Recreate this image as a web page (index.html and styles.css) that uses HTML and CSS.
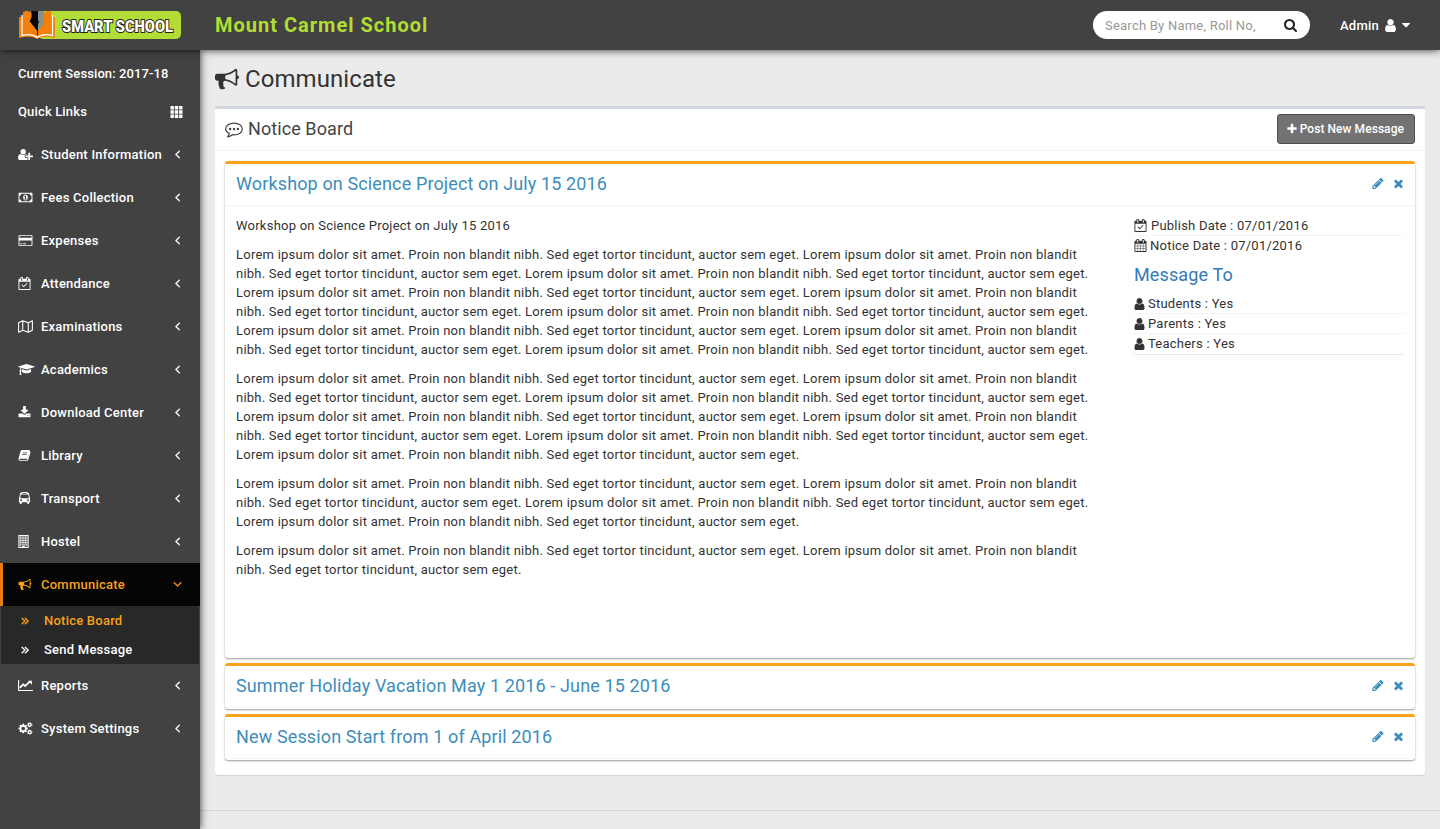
FILE: index.html
```html
<!DOCTYPE html>
<html lang="en">
<head>
<meta charset="utf-8">
<title>Mount Carmel School</title>
<link rel="stylesheet" href="styles.css">
</head>
<body>
<svg class="sprite" xmlns="http://www.w3.org/2000/svg">
  <symbol id="user" viewBox="256 0 1280 1792"><path d="M1536 1399q0 109-62.5 187t-150.5 78h-854q-88 0-150.5-78t-62.5-187q0-85 8.5-160.5t31.5-152 58.5-131 94-89 134.5-34.5q131 128 313 128t313-128q76 0 134.5 34.5t94 89 58.5 131 31.5 152 8.5 160.5zm-256-887q0 159-112.5 271.5t-271.5 112.5-271.5-112.5-112.5-271.5 112.5-271.5 271.5-112.5 271.5 112.5 112.5 271.5z"/></symbol>
  <symbol id="user-plus" viewBox="0 0 2048 1792"><path d="M704 896q-159 0-271.500-112.500t-112.500-271.500 112.500-271.500 271.500-112.500 271.500 112.500 112.500 271.500-112.500 271.500-271.500 112.500zM1664 1024h352q13 0 22.500 9.500t9.500 22.500v192q0 13-9.500 22.500t-22.500 9.500h-352v352q0 13-9.500 22.500t-22.500 9.500h-192q-13 0-22.500-9.500t-9.500-22.500v-352h-352q-13 0-22.500-9.500t-9.500-22.500v-192q0-13 9.500-22.500t22.500-9.500h352v-352q0-13 9.500-22.500t22.500-9.500h192q13 0 22.500 9.500t9.500 22.500v352zM928 1248q0 52 38 90t90 38h256v238q-68 50-171 50h-874q-121 0-194-69t-73-190q0-53 3.500-103.500t14-109 26.500-108.500 43-97.500 62-81 85.500-53.500 111.500-20q19 0 39 17 79 61 154.500 91.500t164.500 30.500 164.500-30.500 154.500-91.500q20-17 39-17 132 0 217 96h-223q-52 0-90 38t-38 90v192z"/></symbol>
  <symbol id="bullhorn" viewBox="0 0 1792 1792"><path d="M1664 640q53 0 90.500 37.500t37.500 90.500-37.500 90.500-90.500 37.500v384q0 52-38 90t-90 38q-417-347-812-380-58 19-91 66t-31 100.500 40 92.500q-20 33-23 65.500t6 58 33.500 55 48 50 61.500 50.500q-29 58-111.500 83t-168.500 11.500-132-55.500q-7-23-29.500-87.500t-32-94.500-23-89-15-101 3.500-98 22-110.500h-122q-66 0-113-47t-47-113v-192q0-66 47-113t113-47h480q435 0 896-384 52 0 90 38t38 90v384zm-128 604v-954q-394 302-768 343v270q377 42 768 341z"/></symbol>
  <symbol id="search" viewBox="64 0 1664 1792"><path d="M1216 832q0-185-131.500-316.500t-316.500-131.500-316.500 131.500-131.500 316.500 131.500 316.500 316.500 131.500 316.500-131.500 131.500-316.500zm512 832q0 52-38 90t-90 38q-54 0-90-38l-343-342q-179 124-399 124-143 0-273.500-55.500t-225-150-150-225-55.500-273.500 55.500-273.500 150-225 225-150 273.500-55.500 273.500 55.500 225 150 150 225 55.500 273.500q0 220-124 399l343 343q37 37 37 90z"/></symbol>
  <symbol id="plus" viewBox="192 0 1408 1792"><path d="M1600 736v192q0 40-28 68t-68 28h-416v416q0 40-28 68t-68 28h-192q-40 0-68-28t-28-68v-416h-416q-40 0-68-28t-28-68v-192q0-40 28-68t68-28h416v-416q0-40 28-68t68-28h192q40 0 68 28t28 68v416h416q40 0 68 28t28 68z"/></symbol>
  <symbol id="times" viewBox="192 0 1408 1792"><path d="M1490 1322q0 40-28 68l-136 136q-28 28-68 28t-68-28l-294-294-294 294q-28 28-68 28t-68-28l-136-136q-28-28-28-68t28-68l294-294-294-294q-28-28-28-68t28-68l136-136q28-28 68-28t68 28l294 294 294-294q28-28 68-28t68 28l136 136q28 28 28 68t-28 68l-294 294 294 294q28 28 28 68z"/></symbol>
  <symbol id="pencil" viewBox="128 0 1536 1792"><path d="M491 1536l91-91-235-235-91 91v107h128v128h107zm523-928q0-22-22-22-10 0-17 7l-542 542q-7 7-7 17 0 22 22 22 10 0 17-7l542-542q7-7 7-17zm-54-192l416 416-832 832h-416v-416zm683 96q0 53-37 90l-166 166-416-416 166-165q36-38 90-38 53 0 91 38l235 234q37 39 37 91z"/></symbol>
  <symbol id="angle-left" viewBox="576 0 640 1792"><path stroke="currentColor" stroke-width="60" d="M1203 544q0 13-10 23l-393 393 393 393q10 10 10 23t-10 23l-50 50q-10 10-23 10t-23-10l-466-466q-10-10-10-23t10-23l466-466q10-10 23-10t23 10l50 50q10 10 10 23z"/></symbol>
  <symbol id="angle-down" viewBox="320 0 1152 1792"><path stroke="currentColor" stroke-width="50" d="M1395 736q0 13-10 23l-466 466q-10 10-23 10t-23-10l-466-466q-10-10-10-23t10-23l50-50q10-10 23-10t23 10l393 393 393-393q10-10 23-10t23 10l50 50q10 10 10 23z"/></symbol>
  <symbol id="double-right" viewBox="0 0 1024 1792"><path fill="none" stroke="currentColor" stroke-width="175" d="M85 500l410 410-410 410M500 500l410 410-410 410"/></symbol>
  <symbol id="caret" viewBox="384 0 1024 1792"><path d="M1408 704q0 26-19 45l-448 448q-19 19-45 19t-45-19l-448-448q-19-19-19-45t19-45 45-19h896q26 0 45 19t19 45z"/></symbol>
  <symbol id="th" viewBox="0 0 12 12"><path d="M0 0h3.400v3.400H0zM4.300 0h3.400v3.400H4.300zM8.600 0H12v3.400H8.600zM0 4.300h3.400v3.400H0zM4.300 4.300h3.400v3.400H4.300zM8.600 4.300H12v3.400H8.600zM0 8.600h3.400V12H0zM4.300 8.600h3.400V12H4.300zM8.600 8.600H12V12H8.600z"/></symbol>
  <symbol id="money" viewBox="0 0 1920 1792"><path fill-rule="evenodd" d="M64 256h1792q64 0 64 64v1152q0 64-64 64H64q-64 0-64-64V320q0-64 64-64zM384 384q0 106-75 181t-181 75v512q106 0 181 75t75 181h1152q0-106 75-181t181-75V640q-106 0-181-75t-75-181zM960 480c190 0 320 180 320 416s-130 416-320 416-320-180-320-416 130-416 320-416zM890 620l-130 120 70 80 60-50v290H780v110h360v-110h-110V620z"/></symbol>
  <symbol id="card" viewBox="0 0 1920 1792"><path fill-rule="evenodd" d="M160 128h1600q160 0 160 160v1216q0 160-160 160H160q-160 0-160-160V288q0-160 160-160zM160 256q-32 0-32 32v224h1664V288q0-32-32-32zM128 896v608q0 32 32 32h1600q32 0 32-32V896zM256 1280h256v128H256zM640 1280h384v128H640z"/></symbol>
  <symbol id="cal-check" viewBox="0 0 1664 1792"><path fill-rule="evenodd" d="M128 256h128v-96q0-160 160-160h64q160 0 160 160v96h384v-96q0-160 160-160h64q160 0 160 160v96h128q128 0 128 128v1280q0 128-128 128H128Q0 1792 0 1664V384q0-128 128-128zM128 640v1024h1408V640zM384 128v384h128V128zM1152 128v384h128V128z"/><path d="M420 1120l90-90 220 220 440-440 90 90-530 530z"/></symbol>
  <symbol id="calendar" viewBox="0 0 1664 1792"><path fill-rule="evenodd" d="M128 256h128v-96q0-160 160-160h64q160 0 160 160v96h384v-96q0-160 160-160h64q160 0 160 160v96h128q128 0 128 128v1280q0 128-128 128H128Q0 1792 0 1664V384q0-128 128-128zM128 640v1024h1408V640zM384 128v384h128V128zM1152 128v384h128V128z"/><path fill="none" stroke="currentColor" stroke-width="64" d="M448 640v1024M832 640v1024M1216 640v1024M128 960h1408M128 1312h1408"/></symbol>
  <symbol id="map" viewBox="0 0 2048 1792"><path fill="none" stroke="currentColor" stroke-width="150" stroke-linejoin="round" d="M75 384L640 96l768 288 565-288v1312l-565 288-768-288-565 288zM640 96v1312M1408 384v1312"/></symbol>
  <symbol id="cap" viewBox="0 0 2304 1792"><path d="M1774 836l18 316q4 69-82 128t-235 93.500-323 34.500-323-34.500-235-93.500-82-128l18-316 574 181q22 7 48 7t48-7zm530-324q0 23-22 31l-1120 352q-4 1-10 1t-10-1l-652-206q-43 34-71 111.500t-34 178.500q63 36 63 109 0 69-58 107l58 433q2 14-8 25-9 11-24 11h-192q-15 0-24-11-10-11-8-25l58-433q-58-38-58-107 0-73 65-111 11-207 98-330l-333-104q-22-8-22-31t22-31l1120-352q4-1 10-1t10 1l1120 352q22 8 22 31z"/></symbol>
  <symbol id="download" viewBox="64 0 1664 1792"><path d="M1344 1344q0-26-19-45t-45-19-45 19-19 45 19 45 45 19 45-19 19-45zm256 0q0-26-19-45t-45-19-45 19-19 45 19 45 45 19 45-19 19-45zm128-224v320q0 40-28 68t-68 28h-1472q-40 0-68-28t-28-68v-320q0-40 28-68t68-28h465l135 136q58 56 136 56t136-56l136-136h464q40 0 68 28t28 68zm-325-569q17 41-14 70l-448 448q-18 19-45 19t-45-19l-448-448q-31-29-14-70 17-39 59-39h256v-448q0-26 19-45t45-19h256q26 0 45 19t19 45v448h256q42 0 59 39z"/></symbol>
  <symbol id="book" viewBox="0 0 1664 1792"><path fill-rule="evenodd" d="M520 128h930q130 0 90 150l60 60q80 50 50 160l-290 960q-50 170-200 170H250Q60 1628 10 1460q-30-80 10-170L300 280q50-152 220-152zM600 480l-28 96h620l28-96zM520 740l-28 96h620l28-96zM170 1330q-50 170 100 170h830q90 0 120-80l270-900-10 0-230 740q-30 70-110 70z"/></symbol>
  <symbol id="bus" viewBox="0 0 1536 1792"><path fill-rule="evenodd" d="M768 0c380 0 620 90 640 260l60 440q68 20 68 120v580h-128v180q0 84-128 84t-128-84v-180H384v180q0 84-128 84t-128-84v-180H0V820Q0 720 68 700l60-440C148 90 388 0 768 0zM480 130v100h576V130zM300 340q-50 0-60 50l-60 400q-8 60 50 60h1076q58 0 50-60l-60-400q-10-50-60-50zM290 1010a120 120 0 1 0 1 0zM1246 1010a120 120 0 1 0 1 0z"/></symbol>
  <symbol id="building" viewBox="0 0 1408 1792"><path fill-rule="evenodd" d="M0 0h1408v1792H0zM150 128v1536h362v-220h384v220h362V128z"/><path fill="none" stroke="currentColor" stroke-width="165" stroke-dasharray="170 50" d="M220 300h990M220 540h990M220 780h990M220 1020h990M220 1260h990M240 1480h200M1000 1480h200"/></symbol>
  <symbol id="chart" viewBox="0 0 2048 1792"><path d="M0 128h150v1388h1898v150H0z"/><path fill="none" stroke="currentColor" stroke-width="230" d="M230 1220l490-490 256 256 660-660"/><path d="M1390 256h480q50 0 50 50v480l-530-530z"/></symbol>
  <symbol id="cogs" viewBox="0 0 1920 1792"><path d="M896 896q0-106-75-181t-181-75-181 75-75 181 75 181 181 75 181-75 75-181zm384-91v185q0 10-7 19.500t-16 10.500l-155 24q-11 35-32 76 34 48 90 115 7 11 7 20 0 12-7 19-23 30-82.500 89.500t-78.500 59.500q-11 0-21-7l-115-90q-37 19-77 31-11 108-23 155-7 24-30 24h-186q-11 0-20-7.500t-10-17.500l-23-153q-34-10-75-31l-118 89q-7 7-20 7-11 0-21-8-144-133-144-160 0-9 7-19 10-14 41-53t47-61q-23-44-35-82l-152-24q-10-1-17-9.500t-7-19.500v-185q0-10 7-19.500t16-10.500l155-24q11-35 32-76-34-48-90-115-7-11-7-20 0-12 7-20 22-30 82-89t79-59q11 0 21 7l115 90q34-18 77-32 11-108 23-154 7-24 30-24h186q11 0 20 7.500t10 17.500l23 153q34 10 75 31l118-89q8-7 20-7 11 0 21 8 144 133 144 160 0 8-7 19-12 16-42 54t-45 60q23 48 34 82l152 23q10 2 17 10.500t7 19.500z"/><g fill="none" stroke="currentColor"><circle cx="1536" cy="384" r="205" stroke-width="180"/><circle cx="1536" cy="384" r="320" stroke-width="90" stroke-dasharray="168 168"/><circle cx="1536" cy="1408" r="205" stroke-width="180"/><circle cx="1536" cy="1408" r="320" stroke-width="90" stroke-dasharray="168 168"/></g></symbol>
  <symbol id="comment" viewBox="0 0 1792 1792"><path fill="none" stroke="currentColor" stroke-width="120" stroke-linejoin="round" d="M896 216c460 0 832 250 832 580s-372 576-832 576q-80 0-160-10-210 180-480 210 130-120 170-330C200 1130 64 970 64 796c0-330 372-580 832-580z"/><circle cx="512" cy="796" r="120"/><circle cx="896" cy="796" r="120"/><circle cx="1280" cy="796" r="120"/></symbol>
</svg>

<header class="topbar">
  <svg class="logo" width="164" height="30" viewBox="0 0 164 30">
    <rect x="20" y="1" width="143" height="28" rx="5" fill="#b2dd36"/>
    <path d="M1 7H37V28Q25 25 19 29Q13 25 1 28z" fill="#f57f0b"/>
    <path d="M4 5V25.500Q14 23 19 27.500Q25 23 34.500 25.500V5" fill="none" stroke="#fff" stroke-width="1.300"/>
    <path d="M12 1H26V22H12z" fill="#85938f"/>
    <path d="M13 1H20V22L11 11Q15 7 13 1z" fill="#050505"/>
    <path d="M5 2Q9 0 12.500 2.500Q14.500 8 11.500 11L19 21V26Q14 21 5 24z" fill="#f57f0b"/>
    <path d="M33.500 2Q30 0 26.500 2.500Q24.500 8 27.500 11L20 21V26Q25 21 33.500 24z" fill="#f57f0b"/>
    <path d="M19.500 12V25" stroke="#050505" stroke-width=".8"/>
    <circle cx="19.500" cy="12" r="1.600" fill="#050505"/>
    <text class="logo-text" x="44" y="22" textLength="111" lengthAdjust="spacingAndGlyphs">SMART SCHOOL</text>
  </svg>
  <div class="school">Mount Carmel School</div>
  <div class="search"><span>Search By Name, Roll No,</span><svg class="i-search"><use href="#search"/></svg></div>
  <div class="admin">Admin <svg class="i-user"><use href="#user"/></svg><svg class="i-caret"><use href="#caret"/></svg></div>
</header>

<div class="shell">
  <aside class="sidebar">
    <div class="session">Current Session: 2017-18</div>
    <div class="quick"><span>Quick Links</span><svg class="i-th"><use href="#th"/></svg></div>
    <nav>
      <a class="item"><svg class="mi w2048"><use href="#user-plus"/></svg><span>Student Information</span><svg class="arrow"><use href="#angle-left"/></svg></a>
      <a class="item"><svg class="mi w1920"><use href="#money"/></svg><span>Fees Collection</span><svg class="arrow"><use href="#angle-left"/></svg></a>
      <a class="item"><svg class="mi w1920"><use href="#card"/></svg><span>Expenses</span><svg class="arrow"><use href="#angle-left"/></svg></a>
      <a class="item"><svg class="mi w1664"><use href="#cal-check"/></svg><span>Attendance</span><svg class="arrow"><use href="#angle-left"/></svg></a>
      <a class="item"><svg class="mi w2048"><use href="#map"/></svg><span>Examinations</span><svg class="arrow"><use href="#angle-left"/></svg></a>
      <a class="item"><svg class="mi w2304"><use href="#cap"/></svg><span>Academics</span><svg class="arrow"><use href="#angle-left"/></svg></a>
      <a class="item"><svg class="mi w1664"><use href="#download"/></svg><span>Download Center</span><svg class="arrow"><use href="#angle-left"/></svg></a>
      <a class="item"><svg class="mi w1664"><use href="#book"/></svg><span>Library</span><svg class="arrow"><use href="#angle-left"/></svg></a>
      <a class="item"><svg class="mi w1664"><use href="#bus"/></svg><span>Transport</span><svg class="arrow"><use href="#angle-left"/></svg></a>
      <a class="item"><svg class="mi w1408"><use href="#building"/></svg><span>Hostel</span><svg class="arrow"><use href="#angle-left"/></svg></a>
      <a class="item active"><svg class="mi w1792"><use href="#bullhorn"/></svg><span>Communicate</span><svg class="arrow down"><use href="#angle-down"/></svg></a>
      <div class="submenu">
        <a class="sub current"><svg class="i-dbl"><use href="#double-right"/></svg><span>Notice Board</span></a>
        <a class="sub"><svg class="i-dbl"><use href="#double-right"/></svg><span>Send Message</span></a>
      </div>
      <a class="item"><svg class="mi w2048"><use href="#chart"/></svg><span>Reports</span><svg class="arrow"><use href="#angle-left"/></svg></a>
      <a class="item"><svg class="mi w1920"><use href="#cogs"/></svg><span>System Settings</span><svg class="arrow"><use href="#angle-left"/></svg></a>
    </nav>
  </aside>

  <div class="content">
    <h1><svg class="i-h1"><use href="#bullhorn"/></svg><span>Communicate</span></h1>
    <section class="box">
      <div class="box-head">
        <h2><svg class="i-h2"><use href="#comment"/></svg><span>Notice Board</span></h2>
        <button class="post"><svg class="i-plus"><use href="#plus"/></svg><span>Post New Message</span></button>
      </div>
      <div class="notices">
        <article class="notice open">
          <div class="notice-head"><h3>Workshop on Science Project on July 15 2016</h3><svg class="i-pencil"><use href="#pencil"/></svg><svg class="i-times"><use href="#times"/></svg></div>
          <div class="notice-body">
            <div class="message">
              <p>Workshop on Science Project on July 15 2016</p>
              <p>Lorem ipsum dolor sit amet. Proin non blandit nibh. Sed eget tortor tincidunt, auctor sem eget. Lorem ipsum dolor sit amet. Proin non blandit nibh. Sed eget tortor tincidunt, auctor sem eget. Lorem ipsum dolor sit amet. Proin non blandit nibh. Sed eget tortor tincidunt, auctor sem eget. Lorem ipsum dolor sit amet. Proin non blandit nibh. Sed eget tortor tincidunt, auctor sem eget. Lorem ipsum dolor sit amet. Proin non blandit nibh. Sed eget tortor tincidunt, auctor sem eget. Lorem ipsum dolor sit amet. Proin non blandit nibh. Sed eget tortor tincidunt, auctor sem eget. Lorem ipsum dolor sit amet. Proin non blandit nibh. Sed eget tortor tincidunt, auctor sem eget. Lorem ipsum dolor sit amet. Proin non blandit nibh. Sed eget tortor tincidunt, auctor sem eget. Lorem ipsum dolor sit amet. Proin non blandit nibh. Sed eget tortor tincidunt, auctor sem eget.</p>
              <p>Lorem ipsum dolor sit amet. Proin non blandit nibh. Sed eget tortor tincidunt, auctor sem eget. Lorem ipsum dolor sit amet. Proin non blandit nibh. Sed eget tortor tincidunt, auctor sem eget. Lorem ipsum dolor sit amet. Proin non blandit nibh. Sed eget tortor tincidunt, auctor sem eget. Lorem ipsum dolor sit amet. Proin non blandit nibh. Sed eget tortor tincidunt, auctor sem eget. Lorem ipsum dolor sit amet. Proin non blandit nibh. Sed eget tortor tincidunt, auctor sem eget. Lorem ipsum dolor sit amet. Proin non blandit nibh. Sed eget tortor tincidunt, auctor sem eget. Lorem ipsum dolor sit amet. Proin non blandit nibh. Sed eget tortor tincidunt, auctor sem eget.</p>
              <p>Lorem ipsum dolor sit amet. Proin non blandit nibh. Sed eget tortor tincidunt, auctor sem eget. Lorem ipsum dolor sit amet. Proin non blandit nibh. Sed eget tortor tincidunt, auctor sem eget. Lorem ipsum dolor sit amet. Proin non blandit nibh. Sed eget tortor tincidunt, auctor sem eget. Lorem ipsum dolor sit amet. Proin non blandit nibh. Sed eget tortor tincidunt, auctor sem eget.</p>
              <p>Lorem ipsum dolor sit amet. Proin non blandit nibh. Sed eget tortor tincidunt, auctor sem eget. Lorem ipsum dolor sit amet. Proin non blandit nibh. Sed eget tortor tincidunt, auctor sem eget.</p>
            </div>
            <div class="details">
              <div class="row"><svg class="i-cal pub"><use href="#cal-check"/></svg>Publish Date : 07/01/2016</div>
              <div class="row plain"><svg class="i-cal"><use href="#calendar"/></svg>Notice Date : 07/01/2016</div>
              <h4>Message To</h4>
              <div class="row"><svg class="i-person"><use href="#user"/></svg>Students : Yes</div>
              <div class="row"><svg class="i-person"><use href="#user"/></svg>Parents : Yes</div>
              <div class="row plain"><svg class="i-person"><use href="#user"/></svg>Teachers : Yes</div>
            </div>
          </div>
        </article>
        <article class="notice">
          <div class="notice-head"><h3>Summer Holiday Vacation May 1 2016 - June 15 2016</h3><svg class="i-pencil"><use href="#pencil"/></svg><svg class="i-times"><use href="#times"/></svg></div>
        </article>
        <article class="notice">
          <div class="notice-head"><h3>New Session Start from 1 of April 2016</h3><svg class="i-pencil"><use href="#pencil"/></svg><svg class="i-times"><use href="#times"/></svg></div>
        </article>
      </div>
    </section>
    <footer class="footer"></footer>
  </div>
</div>
</body>
</html>
```
FILE: styles.css
```css
* { box-sizing: border-box; }
body { margin: 0; height: 829px; overflow: hidden; background: #ebebeb; font: 400 13px/19px Roboto, sans-serif; color: #333; letter-spacing: .235px; }
h1, h2, h3, h4, p { margin: 0; }
svg { display: block; flex: none; fill: currentColor; }
.sprite { position: absolute; width: 0; height: 0; }

.topbar { position: relative; z-index: 3; display: flex; align-items: center; height: 50px; padding: 0 30px 0 18px; background: #424242; color: #fff; box-shadow: 0 0 8px rgba(0,0,0,.8); }
.logo { overflow: visible; }
.logo-text { font: 900 17px Roboto, sans-serif; letter-spacing: 0; fill: #fff; stroke: #222; stroke-width: 2px; paint-order: stroke; }
.school { margin-left: 33px; font-size: 20px; line-height: 50px; font-weight: 700; letter-spacing: 1px; color: #b0de33; }
.search { display: flex; align-items: center; justify-content: space-between; width: 217px; height: 28px; margin-left: auto; padding: 0 13px 0 12px; border-radius: 14px; background: #fff; color: #999; letter-spacing: .23px; }
.i-search { width: 13px; height: 14px; color: #222; }
.admin { display: flex; align-items: center; margin-left: 30px; font-weight: 500; }
.i-user { width: 11px; height: 15px; margin-left: 6px; }
.i-caret { width: 8px; height: 14px; margin-left: 6px; }

.shell { display: flex; height: 779px; }
.sidebar { position: relative; z-index: 2; width: 200px; flex: none; padding-top: 14px; background: #424242; color: #fff; font-weight: 500; box-shadow: 0 0 8px rgba(0,0,0,.8); }
.session { padding-left: 18px; letter-spacing: .1px; }
.quick { display: flex; justify-content: space-between; align-items: center; margin: 19px 17px 12px 18px; letter-spacing: .15px; }
.i-th { width: 13px; height: 12px; }
.item { display: flex; align-items: center; height: 43px; padding: 0 19px 0 18px; }
.item span { flex: 1; white-space: nowrap; }
.mi { height: 13px; }
.w2304 { width: 17px; margin-right: 6px; }
.w2048 { width: 15px; margin-right: 8px; }
.w1920 { width: 15px; margin-right: 8px; }
.w1792 { width: 14px; margin-right: 9px; }
.w1664 { width: 13px; margin-right: 10px; }
.w1408 { width: 11px; margin-right: 12px; }
.arrow { width: 5px; height: 14px; margin: 0 1px 1px 0; }
.arrow.down { width: 9px; margin: 0 -1px 1px 0; }
.item.active { padding-left: 15px; border-left: 3px solid #e87c0e; background: #050505; color: #f9a11b; }
.submenu { margin: 0 1px; background: #282828; }
.sub { display: flex; align-items: center; height: 29px; padding-left: 20px; }
.sub span { margin-left: 15px; }
.i-dbl { width: 8px; height: 14px; }
.current { color: #f9a11b; }

.content { flex: 1; display: flex; flex-direction: column; }
h1 { display: flex; align-items: center; gap: 6px; height: 56px; padding: 2px 0 0 15px; font-size: 24px; font-weight: 400; letter-spacing: .08px; }
.i-h1 { width: 24px; height: 24px; }
.box { margin: 0 15px; height: 669px; border-top: 3px solid #d2d6de; border-radius: 3px; background: #fff; box-shadow: 0 1px 1px rgba(0,0,0,.1); }
.box-head { display: flex; justify-content: space-between; align-items: center; height: 42px; padding: 0 10px 2px; border-bottom: 1px solid #f4f4f4; }
h2 { display: flex; align-items: center; gap: 5px; font-size: 18px; font-weight: 400; color: #444; letter-spacing: .08px; }
.i-h2 { width: 18px; height: 18px; margin-top: 2px; }
.post { display: flex; align-items: center; gap: 3px; height: 30px; padding: 0 10px 0 9px; border: 1px solid #4e4e4e; border-radius: 3px; background: #727272; color: #fff; font: 500 12px Roboto, sans-serif; letter-spacing: .06px; }
.i-plus { width: 10px; height: 12px; }
.notices { display: flex; flex-direction: column; gap: 5px; padding: 10px; }
.notice { height: 46px; border-top: 3px solid #faa21e; border-radius: 3px; box-shadow: 0 1px 2px rgba(0,0,0,.4); }
.notice.open { height: 497px; }
.notice-head { display: flex; align-items: center; height: 42px; padding: 0 11px 2px; border-bottom: 1px solid #f4f4f4; color: #3c8dbc; }
h3, h4 { font-size: 18px; font-weight: 400; letter-spacing: .13px; }
h3 { flex: 1; }
.i-pencil { width: 12px; height: 13px; margin-right: 9px; }
.i-times { width: 11px; height: 13px; }
.notice-body { display: flex; justify-content: space-between; padding: 10px 11px; }
.message { width: 868px; }
.message p { margin-bottom: 10px; }
.details { width: 270px; height: 138px; border-radius: 3px; box-shadow: 0 1px 1px rgba(0,0,0,.1); }
.row { display: flex; align-items: center; height: 20px; border-bottom: 1px solid #f4f4f4; }
.row.plain { border-bottom-color: transparent; }
.i-cal { width: 13px; height: 13px; margin-right: 3px; }
.i-cal.pub { margin-right: 4px; }
.i-person { width: 11px; height: 14px; margin-right: 3px; }
h4 { height: 38px; line-height: 38px; color: #337ab7; }
.footer { height: 19px; margin-top: auto; border-top: 1px solid #d2d6de; }
```
